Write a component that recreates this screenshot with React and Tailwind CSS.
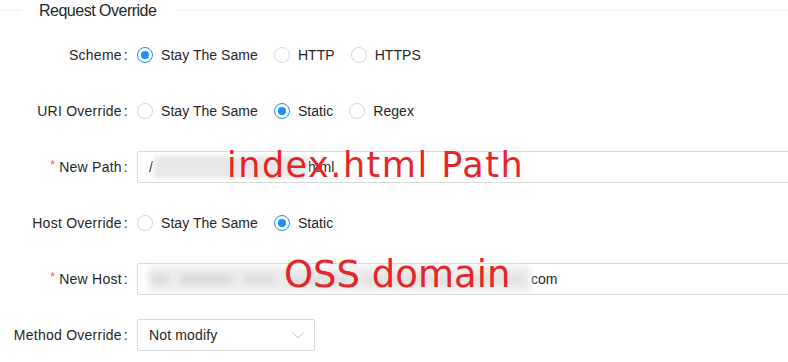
import React from 'react'

const Label = ({ text, required }) => (
  <div className="w-[128px] shrink-0 text-right whitespace-nowrap tracking-[0.25px]">
    {required && (
      <span className="relative -top-[3px] mr-[4px] inline-block text-[12px] leading-none text-[#ff4d4f]">*</span>
    )}
    {text}
    <span className="ml-[2px]">:</span>
  </div>
)

const Radio = ({ checked, label }) => (
  <label className="mr-[16px] flex items-center">
    <span
      className={`flex h-[16px] w-[16px] items-center justify-center rounded-full border bg-white ${
        checked ? 'border-[#1890ff]' : 'border-[#d9d9d9]'
      }`}
    >
      {checked && <span className="h-[8px] w-[8px] rounded-full bg-[#1890ff]" />}
    </span>
    <span className="ml-[8px] tracking-[0.05px]">{label}</span>
  </label>
)

const RadioRow = ({ label, options, value }) => (
  <div className="flex h-[32px] items-center gap-[9px]">
    <Label text={label} />
    <div className="flex items-center">
      {options.map(o => (
        <Radio key={o} label={o} checked={o === value} />
      ))}
    </div>
  </div>
)

const App = () => {
  return (
    <div className="relative h-[362px] w-[788px] overflow-hidden bg-white font-['Liberation_Sans',Arial,sans-serif] text-[14px] text-[#262626]">
      {/* Section title */}
      <div className="flex h-[21px] items-center">
        <div className="h-px w-[21px] bg-[#efefef]" />
        <span className="ml-[18px] mr-[20px] text-[16px] leading-[21px] tracking-[-0.5px]">Request Override</span>
        <div className="h-px flex-1 bg-[#efefef]" />
      </div>

      <div className="mt-[18px] flex flex-col gap-[24px]">
        <RadioRow label="Scheme" options={['Stay The Same', 'HTTP', 'HTTPS']} value="Stay The Same" />
        <RadioRow label="URI Override" options={['Stay The Same', 'Static', 'Regex']} value="Static" />

        <div className="flex h-[32px] items-center gap-[9px]">
          <Label text="New Path" required />
          <div className="relative flex h-[32px] w-[660px] shrink-0 items-center rounded-[2px] border border-[#d9d9d9] px-[11px]">
            <span>/</span>
            <span className="ml-[1px] inline-block h-[22px] w-[154px] bg-[#e8e8e8] blur-[2px]" />
            <span>html</span>
            <span className="absolute left-[89px] -top-[4px] whitespace-nowrap font-['DejaVu_Sans',sans-serif] text-[35px] leading-[35px] tracking-[1.5px] text-[#e52528]">
              index.html Path
            </span>
          </div>
        </div>

        <RadioRow label="Host Override" options={['Stay The Same', 'Static']} value="Static" />

        <div className="flex h-[32px] items-center gap-[9px]">
          <Label text="New Host" required />
          <div className="relative flex h-[32px] w-[660px] shrink-0 items-center rounded-[2px] border border-[#d9d9d9] px-[10px]">
            <div className="flex h-[24px] w-[383px] items-center gap-[12px] bg-[#ececec] px-[4px] blur-[3px]">
              <span className="h-[9px] w-[16px] bg-[#d8d8d8]" />
              <span className="h-[9px] w-[52px] bg-[#d8d8d8]" />
              <span className="h-[9px] w-[30px] bg-[#dcdcdc]" />
              <span className="h-[9px] w-[64px] bg-[#dedede]" />
              <span className="h-[9px] w-[90px] bg-[#e0e0e0]" />
              <span className="h-[9px] w-[60px] bg-[#e0e0e0]" />
            </div>
            <span>com</span>
            <span className="absolute left-[146px] -top-[8px] whitespace-nowrap font-['DejaVu_Sans',sans-serif] text-[37px] leading-[37px] text-[#e52528]">
              OSS domain
            </span>
          </div>
        </div>

        <div className="flex h-[32px] items-center gap-[9px]">
          <Label text="Method Override" />
          <div className="flex h-[32px] w-[178px] shrink-0 items-center justify-between rounded-[2px] border border-[#d9d9d9] pl-[11px] pr-[10px]">
            <span className="tracking-[0.15px]">Not modify</span>
            <svg width="12" height="7" viewBox="0 0 12 7" fill="none">
              <polyline points="0.5,0.5 6,6 11.5,0.5" stroke="#bfbfbf" strokeWidth="1" />
            </svg>
          </div>
        </div>
      </div>
    </div>
  )
}

export default App
